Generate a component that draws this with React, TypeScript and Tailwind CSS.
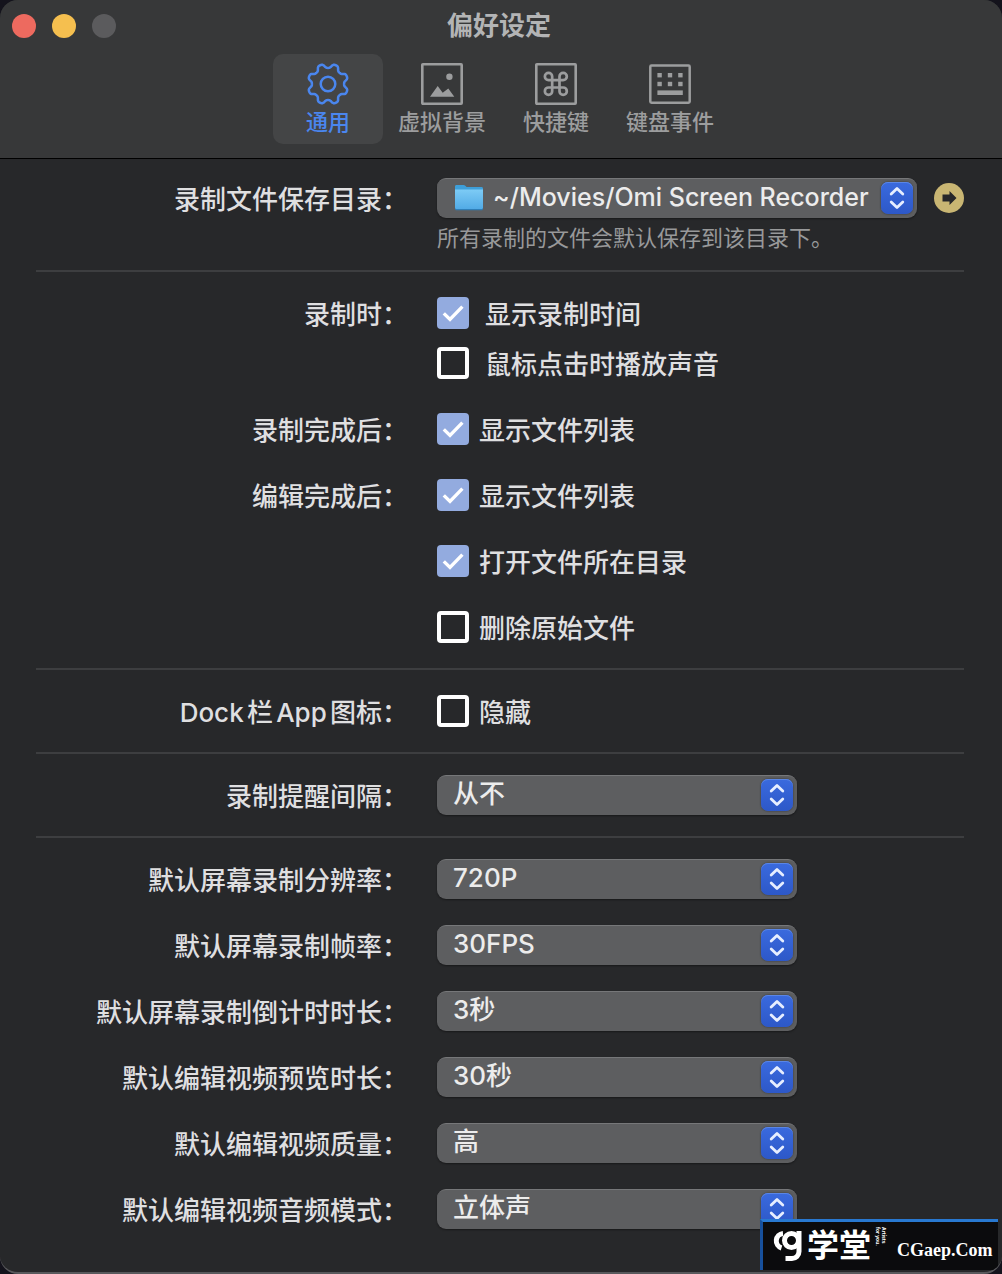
import { useState, type ReactNode } from 'react'

type TabId = 'general' | 'background' | 'shortcut' | 'keyboard'

interface Option {
  id: string
  label: string
  value: string
  choices: string[]
}

const recordingOptions: Option[] = [
  { id: 'resolution', label: '默认屏幕录制分辨率：', value: '720P', choices: ['720P', '1080P', '原始'] },
  { id: 'fps', label: '默认屏幕录制帧率：', value: '30FPS', choices: ['15FPS', '30FPS', '60FPS'] },
  { id: 'countdown', label: '默认屏幕录制倒计时时长：', value: '3秒', choices: ['3秒', '5秒', '10秒'] },
  { id: 'preview', label: '默认编辑视频预览时长：', value: '30秒', choices: ['10秒', '30秒', '60秒'] },
  { id: 'quality', label: '默认编辑视频质量：', value: '高', choices: ['低', '中', '高'] },
  { id: 'audio', label: '默认编辑视频音频模式：', value: '立体声', choices: ['单声道', '立体声'] },
]

// Eight-lobed gear outline around (21, 21)
const gearPath = (() => {
  const points: string[] = []
  for (let i = 0; i < 160; i++) {
    const a = (i / 160) * Math.PI * 2
    const wave = Math.tanh(-1.6 * Math.cos(8 * a)) / Math.tanh(1.6)
    const r = 18.2 + 2.1 * wave
    points.push(`${(21 + r * Math.cos(a)).toFixed(2)} ${(21 + r * Math.sin(a)).toFixed(2)}`)
  }
  return `M${points.join('L')}Z`
})()

function GearIcon() {
  return (
    <svg viewBox="0 0 42 42" className="h-[42px] w-[42px] overflow-visible" fill="none" stroke="currentColor" strokeWidth="2.5" strokeLinejoin="round">
      <path d={gearPath} />
      <circle cx="21" cy="21" r="7.3" />
    </svg>
  )
}

function PictureIcon() {
  return (
    <svg viewBox="0 0 42 42" className="h-[42px] w-[42px]" fill="currentColor">
      <rect x="1.3" y="1.3" width="39.4" height="39.4" rx="0.6" fill="none" stroke="currentColor" strokeWidth="2.6" />
      <circle cx="28.4" cy="13.7" r="3.2" />
      <path d="M9 33.8 16.7 23l5 6.8 5.6-4.2 6 8.2z" />
    </svg>
  )
}

function CommandIcon() {
  return (
    <svg viewBox="0 0 42 42" className="h-[42px] w-[42px]" fill="none" stroke="currentColor">
      <rect x="1.3" y="1.3" width="39.4" height="39.4" rx="0.6" strokeWidth="2.6" />
      <path
        transform="translate(6.2 6.2) scale(1.22)"
        strokeWidth="2.2"
        d="M15 6v12a3 3 0 1 0 3-3H6a3 3 0 1 0 3 3V6a3 3 0 1 0-3 3h12a3 3 0 1 0-3-3"
      />
    </svg>
  )
}

function KeyboardIcon() {
  return (
    <svg viewBox="0 0 42 42" className="h-[42px] w-[42px]" fill="currentColor">
      <rect x="1.3" y="2.6" width="39.4" height="37.2" rx="1.2" fill="none" stroke="currentColor" strokeWidth="2.5" />
      {[8.4, 18.8, 29.2].map((x) => (
        <g key={x}>
          <rect x={x} y="10" width="4.4" height="4.4" />
          <rect x={x} y="18.8" width="4.4" height="4.4" />
        </g>
      ))}
      <rect x="8.4" y="27.4" width="25.4" height="4.6" />
    </svg>
  )
}

function FolderIcon() {
  return (
    <svg viewBox="0 0 30 28" className="h-7 w-[30px]">
      <defs>
        <linearGradient id="folder" x1="0" y1="0" x2="0" y2="1">
          <stop offset="0" stopColor="#7dcbf5" />
          <stop offset="1" stopColor="#52abe6" />
        </linearGradient>
      </defs>
      <path d="M1 2.5C1 1.6 1.6 1 2.5 1h7c.8 0 1.3.3 1.8.8l1.3 1.2h14.9c.9 0 1.5.6 1.5 1.5V10H1z" fill="#3e9fd9" />
      <path d="M1 6.5h28v18.2c0 .9-.6 1.5-1.5 1.5h-25c-.9 0-1.5-.6-1.5-1.5z" fill="#2f7fb8" />
      <path d="M1 5.5h28v18c0 .9-.6 1.5-1.5 1.5h-25c-.9 0-1.5-.6-1.5-1.5z" fill="url(#folder)" />
    </svg>
  )
}

const tabs: { id: TabId; label: string; icon: ReactNode }[] = [
  { id: 'general', label: '通用', icon: <GearIcon /> },
  { id: 'background', label: '虚拟背景', icon: <PictureIcon /> },
  { id: 'shortcut', label: '快捷键', icon: <CommandIcon /> },
  { id: 'keyboard', label: '键盘事件', icon: <KeyboardIcon /> },
]

function Section({ children, last = false }: { children: ReactNode; last?: boolean }) {
  return (
    <section className={`flex flex-col gap-[26px] pt-[21px] ${last ? 'pb-[43px]' : 'border-b-2 border-[#3d3e40] pb-[21px]'}`}>
      {children}
    </section>
  )
}

function Row({ label, htmlFor, children }: { label?: string; htmlFor?: string; children: ReactNode }) {
  return (
    <div className="grid grid-cols-[372px_minmax(0,1fr)] gap-x-[29px]">
      {htmlFor ? (
        <label htmlFor={htmlFor} className="flex h-10 items-center justify-end whitespace-nowrap pt-1">{label}</label>
      ) : (
        <span className="flex h-10 items-center justify-end whitespace-nowrap pt-1">{label}</span>
      )}
      <div>{children}</div>
    </div>
  )
}

function Check({ label, defaultChecked = false, wide = false }: { label: string; defaultChecked?: boolean; wide?: boolean }) {
  return (
    <label className={`flex h-10 w-fit items-center ${wide ? 'gap-4' : 'gap-[10px]'}`}>
      <span className="relative h-8 w-8 flex-none">
        <input
          type="checkbox"
          defaultChecked={defaultChecked}
          className="peer block h-8 w-8 appearance-none rounded-[4px] border-4 border-white checked:border-0 checked:bg-[#93abdf]"
        />
        <svg viewBox="0 0 32 32" className="pointer-events-none absolute inset-0 hidden h-8 w-8 peer-checked:block" fill="none" stroke="white" strokeWidth="3.4">
          <path d="M6.8 16.4 13 22.4 25.4 9.6" />
        </svg>
      </span>
      <span className="pt-1">{label}</span>
    </label>
  )
}

function Select({ id, value, choices, icon }: { id: string; value: string; choices: string[]; icon?: ReactNode }) {
  return (
    <div className={`relative ${icon ? 'min-w-0 flex-1' : 'w-[360px] max-w-full'}`}>
      <select
        id={id}
        defaultValue={value}
        className={`block h-10 w-full appearance-none rounded-[9px] border-t border-[#767779] bg-[#5d5e60] pb-1 pr-10 text-[#ececec] shadow-[0_1px_2px_rgba(0,0,0,0.4)] ${icon ? 'pl-14 text-[25px]' : 'pl-4'}`}
      >
        {choices.map((choice) => (
          <option key={choice}>{choice}</option>
        ))}
      </select>
      {icon && <span className="pointer-events-none absolute left-[17px] top-[6px]">{icon}</span>}
      <span className="pointer-events-none absolute right-1 top-1 h-8 w-8 rounded-[7px] bg-gradient-to-b from-[#3a6ade] to-[#2d58c8] shadow-[inset_0_1px_0_#5a86e6,0_0_2px_rgba(0,0,0,0.5)]">
        <svg viewBox="0 0 32 32" className="h-8 w-8" fill="none" stroke="#e6eeff" strokeWidth="2.8" strokeLinecap="round" strokeLinejoin="round">
          <path d="M10.2 12 16 6.4 21.800 12M10.200 20 16 25.600 21.800 20" />
        </svg>
      </span>
    </div>
  )
}

function Watermark() {
  return (
    <div className="absolute bottom-0.5 right-1 flex h-[51px] w-[238px] items-center whitespace-nowrap border-l-[3px] border-t-[3px] border-l-[#17509c] border-t-[#2878d0] bg-[#0b0b0d] text-white">
      <svg viewBox="0 0 30 32" className="ml-[10px] h-8 w-[30px] flex-none" fill="none" stroke="white" strokeWidth="5">
        <path d="M10 3.4A7.5 7.5 0 0 0 8.500 18" />
        <circle cx="18.5" cy="10.5" r="7" />
        <path d="M26 1v20.500a7 7 0 0 1-7 7h-6.500" />
      </svg>
      <span className="ml-1 text-[32px] font-bold leading-8">学堂</span>
      <span className="mb-5 ml-1 text-[5px] font-bold leading-[6px] [writing-mode:vertical-rl]">
        Artists
        <br />
        for you.
      </span>
      <span className="ml-[10px] pt-2 font-['Liberation_Serif',serif] text-[18px] font-bold leading-6">CGaep.Com</span>
    </div>
  )
}

export default function App() {
  const [activeTab, setActiveTab] = useState<TabId>('general')

  return (
    <div className="min-h-screen bg-[#14131c] font-['Inter','Noto_Sans_CJK_SC',sans-serif] text-[26px] font-medium leading-9 text-[#dfdfe0] [text-autospace:normal]">
      <div className="relative overflow-hidden rounded-[18px] border-b-2 border-[#59595c] bg-[#27282a]">
        {/* Title bar and tabs */}
        <header className="border-b border-black bg-[#373839] pb-[14px]">
          <div className="grid h-[54px] grid-cols-[1fr_auto_1fr] items-center pb-[2px] pl-3 pr-4">
            <div className="flex gap-4">
              <button aria-label="关闭" className="h-6 w-6 rounded-full bg-[#ed6a5f]" />
              <button aria-label="最小化" className="h-6 w-6 rounded-full bg-[#f5bf4f]" />
              <button aria-label="缩放" disabled className="h-6 w-6 rounded-full bg-[#5b5b5d]" />
            </div>
            <h1 className="font-bold text-[#b3b4b5]">偏好设定</h1>
          </div>
          <nav className="flex justify-center gap-1 pr-1">
            {tabs.map((tab) => (
              <button
                key={tab.id}
                onClick={() => setActiveTab(tab.id)}
                className={`flex h-[90px] w-[110px] flex-col items-center rounded-[10px] pt-[9px] text-[22px] leading-[34px] ${
                  activeTab === tab.id ? 'bg-[#444546] text-[#4a86ee]' : 'text-[#9c9d9e]'
                }`}
              >
                {tab.icon}
                <span>{tab.label}</span>
              </button>
            ))}
          </nav>
        </header>

        <main className="pl-9 pr-[38px]">
          {/* Save location */}
          <section className="border-b-2 border-[#3d3e40] pb-3 pt-[19px]">
            <Row label="录制文件保存目录：" htmlFor="directory">
              <div className="flex items-center gap-[17px]">
                <Select id="directory" value="~/Movies/Omi Screen Recorder" choices={['~/Movies/Omi Screen Recorder']} icon={<FolderIcon />} />
                <button aria-label="打开目录" className="h-[30px] w-[30px] flex-none rounded-full bg-[#c9b673]">
                  <svg viewBox="0 0 30 30" className="h-[30px] w-[30px]" fill="#26272a">
                    <path d="M8.500 11.500h7V8l7 7-7 7v-3.500h-7z" />
                  </svg>
                </button>
              </div>
              <p className="text-[22px] font-normal leading-10 text-[#98999a]">所有录制的文件会默认保存到该目录下。</p>
            </Row>
          </section>

          <Section>
            <Row label="录制时：">
              <div className="flex flex-col gap-[10px]">
                <Check label="显示录制时间" defaultChecked wide />
                <Check label="鼠标点击时播放声音" wide />
              </div>
            </Row>
            <Row label="录制完成后：">
              <Check label="显示文件列表" defaultChecked />
            </Row>
            <Row label="编辑完成后：">
              <div className="flex flex-col gap-[26px]">
                <Check label="显示文件列表" defaultChecked />
                <Check label="打开文件所在目录" defaultChecked />
                <Check label="删除原始文件" />
              </div>
            </Row>
          </Section>

          <Section>
            <Row label="Dock栏App图标：">
              <Check label="隐藏" />
            </Row>
          </Section>

          <Section>
            <Row label="录制提醒间隔：" htmlFor="reminder">
              <Select id="reminder" value="从不" choices={['从不', '每10分钟', '每30分钟']} />
            </Row>
          </Section>

          {/* Recording defaults */}
          <Section last>
            {recordingOptions.map((option) => (
              <Row key={option.id} label={option.label} htmlFor={option.id}>
                <Select id={option.id} value={option.value} choices={option.choices} />
              </Row>
            ))}
          </Section>
        </main>
        <Watermark />
      </div>
    </div>
  )
}
